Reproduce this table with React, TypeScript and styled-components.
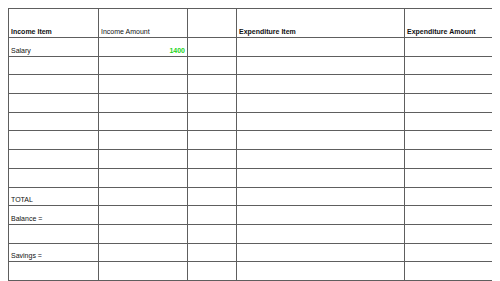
import styled, { createGlobalStyle } from "styled-components";

const GlobalStyle = createGlobalStyle`
  body {
    margin: 8px;
    background: #ffffff;
    font-family: "Liberation Sans", Arial, sans-serif;
  }
`

const Sheet = styled.table`
  width: 484px;
  border-collapse: collapse;
  table-layout: fixed;
  font-size: 7px;
  color: #111;
`

const Row = styled.tr<{ $head?: boolean }>`
  height: ${(p) => (p.$head ? "29px" : "18.7px")};
`

const Cell = styled.td<{ $bold?: boolean; $amount?: boolean }>`
  border: 1px solid #5e5e5e;
  padding: 0 2px 2px 2px;
  vertical-align: bottom;
  white-space: nowrap;
  overflow: hidden;
  font-weight: ${(p) => (p.$bold || p.$amount ? "bold" : "normal")};
  text-align: ${(p) => (p.$amount ? "right" : "left")};
  color: ${(p) => (p.$amount ? "#22d422" : "#111")};
`

type Line = { item?: string; amount?: string }

const lines: Line[] = [
  { item: "Salary", amount: "1400" },
  {}, {}, {}, {}, {}, {}, {},
  { item: "TOTAL" },
  { item: "Balance =" },
  {},
  { item: "Savings =" },
  {},
]

export default function App() {
  return (
    <>
      <GlobalStyle />
      <Sheet>
        <colgroup>
          <col style={{ width: 90 }} />
          <col style={{ width: 89 }} />
          <col style={{ width: 49 }} />
          <col style={{ width: 168 }} />
          <col style={{ width: 88 }} />
        </colgroup>
        <tbody>
          <Row $head>
            <Cell $bold>Income Item</Cell>
            <Cell>Income Amount</Cell>
            <Cell></Cell>
            <Cell $bold>Expenditure Item</Cell>
            <Cell $bold>Expenditure Amount</Cell>
          </Row>
          {lines.map((l, i) => (
            <Row key={i}>
              <Cell>{l.item}</Cell>
              <Cell $amount>{l.amount}</Cell>
              <Cell></Cell>
              <Cell></Cell>
              <Cell></Cell>
            </Row>
          ))}
        </tbody>
      </Sheet>
    </>
  )
}
